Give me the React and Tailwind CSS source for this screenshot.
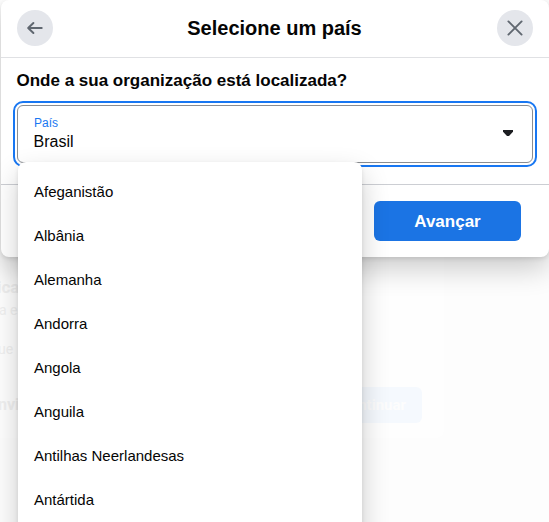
const countries = [
  'Afeganistão',
  'Albânia',
  'Alemanha',
  'Andorra',
  'Angola',
  'Anguila',
  'Antilhas Neerlandesas',
  'Antártida',
];

function IconButton({ label, children }) {
  return (
    <button
      aria-label={label}
      className="flex h-9 w-9 shrink-0 items-center justify-center rounded-full bg-[#e4e6eb] text-[#606770]"
    >
      {children}
    </button>
  );
}

// Faded page that stays visible behind the dialog.
function Backdrop() {
  return (
    <div className="absolute inset-0 overflow-hidden bg-[#fdfdfd] font-['Roboto',sans-serif]">
      <div className="h-[438px] w-[444px] rounded-br-lg bg-[#fefefe] pt-[276px] whitespace-nowrap text-[#f0f0f0]">
        <p className="-ml-[3px] text-[17px] leading-[22px] font-bold">ica</p>
        <p className="-ml-px text-[14px] leading-6">a e</p>
        <p className="-ml-0.5 mt-[15px] text-[14px] leading-6">ue</p>
        <div className="mt-[26px] flex h-9 w-[422px] items-center justify-between">
          <span className="-ml-0.5 text-[16px] font-bold">nvi</span>
          <span className="flex h-9 w-[98px] items-center justify-end rounded-md bg-[#f5f9fe] pr-4 text-[15px] font-bold text-[#fdfdfd]">
            Continuar
          </span>
        </div>
      </div>
    </div>
  );
}

function CountryMenu() {
  return (
    <ul className="absolute top-[162px] left-[18px] h-[420px] w-[344px] rounded-lg bg-white py-2 shadow-[0_12px_28px_0_rgba(0,0,0,0.2),0_2px_4px_0_rgba(0,0,0,0.1)]">
      {countries.map((name) => (
        <li key={name} className="flex h-11 items-center px-4 text-[15px] leading-5">
          {name}
        </li>
      ))}
    </ul>
  );
}

export default function App() {
  return (
    <div className="relative h-[522px] w-[549px] overflow-hidden font-['Liberation_Sans',Arial,sans-serif] text-[#050505]">
      <Backdrop />
      <div className="relative ml-px h-[257px] w-[548px] rounded-lg bg-white shadow-[0_12px_28px_0_rgba(0,0,0,0.2),0_2px_4px_0_rgba(0,0,0,0.1)]">
        <header className="flex h-[58px] items-center justify-between border-b border-[#e0e1e4] px-4 pb-px">
          <IconButton label="Voltar">
            <svg width="20" height="20" viewBox="0 0 20 20" fill="none" stroke="currentColor" strokeWidth="2" strokeLinecap="round" strokeLinejoin="round">
              <path d="M16.7 10H3.3M8.4 5 3.2 10l5.2 5" />
            </svg>
          </IconButton>
          <h1 className="mr-px text-[20px] leading-6 font-bold">Selecione um país</h1>
          <IconButton label="Fechar">
            <svg width="20" height="20" viewBox="0 0 20 20" fill="none" stroke="currentColor" strokeWidth="1.9" strokeLinecap="round">
              <path d="M3.4 3.4l13.2 13.2M16.6 3.4 3.4 16.6" />
            </svg>
          </IconButton>
        </header>
        <section className="h-[127px] border-b border-[#ccced3] px-4 pt-[13px]">
          <h2 className="-ml-[0.5px] text-[17px] leading-5 font-bold">Onde a sua organização está localizada?</h2>
          <div className="-mx-1 mt-[10px] rounded-[10px] border-2 border-[#1877f2] p-0.5">
            <div className="flex h-[58px] items-center justify-between rounded-md border border-[#8a8d91] pr-[19px] pl-4">
              <div>
                <div className="-mt-px mb-px text-[12px] leading-4 text-[#1877f2]">País</div>
                <div className="-ml-[0.5px] text-[16px] leading-5">Brasil</div>
              </div>
              <svg width="10" height="6" viewBox="0 0 10 6" className="mb-0.5" fill="#1c1e21">
                <path d="M0 0h10v1.8L6 6H4L0 1.8z" />
              </svg>
            </div>
          </div>
        </section>
        <footer className="flex justify-end px-7 pt-4">
          <button className="h-10 w-[147px] rounded-md bg-[#1b74e4] pt-0.5 text-[17px] font-bold text-white">Avançar</button>
        </footer>
      </div>
      <CountryMenu />
    </div>
  );
}
